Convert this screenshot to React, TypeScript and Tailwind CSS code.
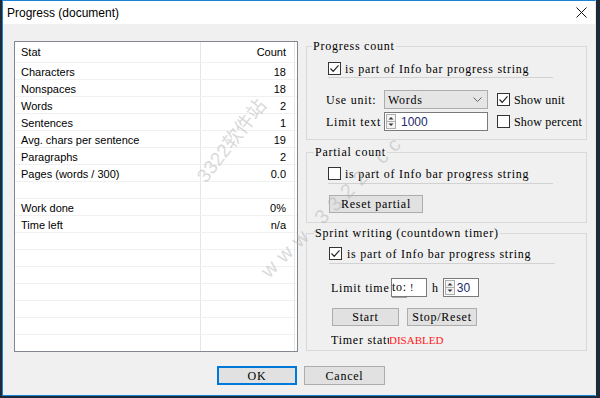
import React from 'react'

// rows of the stats list (empty label = spacer row)
const STATS: [string, string][] = [
  ['Characters', '18'],
  ['Nonspaces', '18'],
  ['Words', '2'],
  ['Sentences', '1'],
  ['Avg. chars per sentence', '19'],
  ['Paragraphs', '2'],
  ['Pages (words / 300)', '0.0'],
  ['', ''],
  ['Work done', '0%'],
  ['Time left', 'n/a'],
  ['', ''],
  ['', ''],
  ['', ''],
  ['', ''],
  ['', ''],
  ['', ''],
  ['', ''],
]

export default function App() {
  return (
    <div className="h-[398px] w-[600px] overflow-hidden bg-[#1d2a38]">
      <div className="relative ml-[2px] flex h-[396px] w-[594px] flex-col border border-[#1883d7] border-r-[#e8e8e8] bg-[#f0f0f0]">
        {/* title bar */}
        <div className="flex h-[23px] items-center justify-between bg-white pl-[4px] pr-[8px]">
          <span className="font-['Liberation_Sans',sans-serif] text-[12px] text-black">
            Progress (document)
          </span>
          <svg width="11" height="11" viewBox="0 0 11 11">
            <path d="M0.5 0.5 L10.5 10.5 M10.5 0.5 L0.5 10.5" stroke="#111" strokeWidth="1" />
          </svg>
        </div>

        <div className="flex pl-[11px] pt-[17px]">
          {/* stats list */}
          <div className="h-[311px] w-[284px] overflow-hidden border border-[#828790] bg-white font-['Liberation_Sans',sans-serif] text-[11px] text-black">
            <div className="flex h-[21px] border-b border-[#f0f0f0]">
              <div className="flex w-[186px] items-center border-r border-[#e5e5e5] pl-[6px] pt-[1px]">Stat</div>
              <div className="flex w-[94px] items-center justify-end border-r border-[#e5e5e5] pr-[8px] pt-[1px]">Count</div>
            </div>
            {STATS.map(([label, value], i) => (
              <div key={i} className="flex h-[17px] border-b border-[#f0f0f0]">
                <div className="flex w-[186px] items-center border-r border-[#e5e5e5] pl-[6px] pt-[2px]">{label}</div>
                <div className="flex w-[94px] items-center justify-end border-r border-[#e5e5e5] pr-[8px] pt-[2px]">{value}</div>
              </div>
            ))}
          </div>

          {/* option groups */}
          <div className="ml-[8px] mt-[5px] flex w-[281px] flex-col font-['Liberation_Serif',serif] text-[12px] tracking-[0.75px] text-black">
            <Group title="Progress count" height="h-[94px]" left="left-[5px]">
              <div className="pl-[21px] pt-[15px]">
                <div className="flex h-[13px] items-center gap-[4px]">
                  <Check on />
                  <span>is part of Info bar progress string</span>
                </div>
                <div className="mt-[2px] h-px w-[225px] bg-[#d2d2d2]" />
                <div className="-ml-[2px] mt-[12px] flex h-[19px] items-center">
                  <span className="w-[58px] whitespace-nowrap">Use unit:</span>
                  <div className="flex h-[19px] w-[104px] items-center justify-between border border-[#adadad] bg-[#e5e5e5] pl-[3px] pr-[5px]">
                    <span>Words</span>
                    <svg width="9" height="5" viewBox="0 0 9 5">
                      <path d="M0.5 0.5 L4.5 4.5 L8.5 0.5" fill="none" stroke="#666" strokeWidth="1" />
                    </svg>
                  </div>
                  <div className="ml-[9px] flex items-center gap-[4px]">
                    <Check on />
                    <span className="whitespace-nowrap tracking-[0.2px]">Show unit</span>
                  </div>
                </div>
                <div className="-ml-[2px] mt-[3px] flex h-[19px] items-center">
                  <span className="w-[58px] whitespace-nowrap">Limit text</span>
                  <div className="flex h-[19px] w-[104px] items-center border border-[#7a7a7a] bg-white pl-[1px]">
                    <Spin />
                    <span className="ml-[5px] font-['Liberation_Sans',sans-serif] text-[12px] tracking-normal text-[#1b2a6b]">1000</span>
                  </div>
                  <div className="ml-[9px] flex items-center gap-[4px]">
                    <Check />
                    <span className="whitespace-nowrap tracking-[0.2px]">Show percent</span>
                  </div>
                </div>
              </div>
            </Group>

            <Group title="Partial count" height="h-[71px]" left="left-[7px]" className="mt-[12px]">
              <div className="pl-[21px] pt-[14px]">
                <div className="flex h-[13px] items-center gap-[4px]">
                  <Check />
                  <span>is part of Info bar progress string</span>
                </div>
                <div className="mt-[3px] h-px w-[225px] bg-[#d2d2d2]" />
                <button className="ml-[1px] mt-[11px] flex h-[18px] w-[94px] items-center justify-center border border-[#adadad] bg-[#e1e1e1]">
                  Reset partial
                </button>
              </div>
            </Group>

            <Group title="Sprint writing (countdown timer)" height="h-[118px]" left="left-[7px]" className="mt-[10px]">
              <div className="pl-[22px] pt-[13px]">
                <div className="flex h-[13px] items-center gap-[5px]">
                  <Check on />
                  <span>is part of Info bar progress string</span>
                </div>
                <div className="mt-[3px] h-px w-[226px] bg-[#d2d2d2]" />
                <div className="ml-[2px] mt-[14px] flex h-[19px] items-center">
                  <span className="w-[60px] whitespace-nowrap">Limit time</span>
                  <div className="flex h-[19px] w-[36px] items-center border border-[#7a7a7a] bg-white">
                    <span className="border-b border-[#a0a0a0] pb-[1px]">to:</span>
                    <span className="ml-[3px] text-[10px]">!</span>
                  </div>
                  <span className="ml-[5px]">h</span>
                  <div className="ml-[4px] flex h-[19px] w-[36px] items-center border border-[#7a7a7a] bg-white pl-[1px]">
                    <Spin />
                    <span className="ml-[2px] font-['Liberation_Sans',sans-serif] text-[12px] tracking-normal text-[#1b2a6b]">30</span>
                  </div>
                </div>
                <div className="ml-[3px] mt-[11px] flex gap-[8px]">
                  <button className="flex h-[18px] w-[67px] items-center justify-center border border-[#adadad] bg-[#e1e1e1]">
                    Start
                  </button>
                  <button className="flex h-[18px] w-[70px] items-center justify-center border border-[#adadad] bg-[#e1e1e1]">
                    Stop/Reset
                  </button>
                </div>
                <div className="ml-[2px] mt-[8px] flex h-[12px] items-center whitespace-nowrap">
                  <span className="w-[58px] overflow-hidden">Timer status:</span>
                  <span className="text-[11px] tracking-normal text-[#ff1a1a]">DISABLED</span>
                </div>
              </div>
            </Group>
          </div>
        </div>

        {/* dialog buttons */}
        <div className="mt-[14px] flex gap-[7px] pl-[214px] font-['Liberation_Serif',serif] text-[12px] tracking-[0.75px] text-black">
          <button className="flex h-[19px] w-[80px] items-center justify-center border-2 border-[#0078d7] bg-[#e1e1e1]">
            OK
          </button>
          <button className="flex h-[19px] w-[81px] items-center justify-center border border-[#adadad] bg-[#e1e1e1]">
            Cancel
          </button>
        </div>

        {/* watermark */}
        <span className="pointer-events-none absolute left-[229px] top-[140px] -translate-x-1/2 -translate-y-1/2 -rotate-[52deg] whitespace-nowrap font-['Liberation_Sans','Noto_Sans_CJK_SC',sans-serif] text-[19px] text-[#b4b4b4]/50">
          3322软件站
        </span>
        <span className="pointer-events-none absolute left-[330px] top-[204px] -translate-x-1/2 -translate-y-1/2 -rotate-45 whitespace-nowrap font-['Liberation_Sans',sans-serif] text-[20px] tracking-[7px] text-[#b4b4b4]/50">
          www.3322.cc
        </span>
      </div>
    </div>
  )
}

function Group({
  title,
  height,
  left,
  className = '',
  children,
}: {
  title: string
  height: string
  left: string
  className?: string
  children: React.ReactNode
}) {
  return (
    <div className={`relative w-[281px] border border-[#d9d9d9] ${height} ${className}`}>
      <span className={`absolute -top-[7px] whitespace-nowrap bg-[#f0f0f0] px-[1px] leading-[12px] ${left}`}>{title}</span>
      {children}
    </div>
  )
}

function Check({ on = false }: { on?: boolean }) {
  return (
    <span className="flex h-[13px] w-[13px] shrink-0 items-center justify-center border border-[#333] bg-white">
      {on && (
        <svg width="11" height="11" viewBox="0 0 11 11">
          <path d="M1.5 5.5 L4.2 8.3 L9.5 2.3" fill="none" stroke="#222" strokeWidth="1.2" />
        </svg>
      )}
    </span>
  )
}

function Spin() {
  return (
    <svg width="10" height="15" viewBox="0 0 10 15" className="shrink-0">
      <rect x="0.5" y="0.5" width="9" height="14" fill="#f4f4f4" stroke="#adadad" />
      <line x1="0.5" y1="7.5" x2="9.5" y2="7.5" stroke="#adadad" />
      <path d="M2.5 5.5 L5 3 L7.5 5.5 Z" fill="#333" />
      <path d="M2.5 9.5 L5 12 L7.5 9.5 Z" fill="#333" />
    </svg>
  )
}
